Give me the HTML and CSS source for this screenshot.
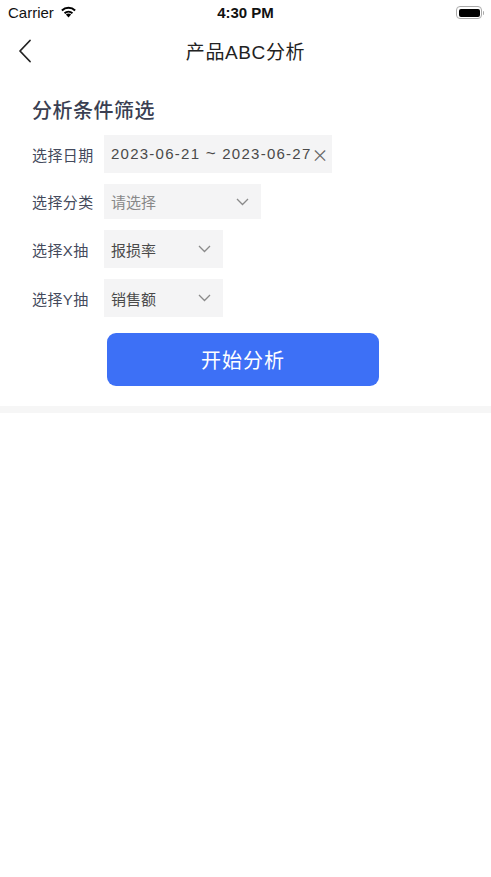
FILE: index.html
```html
<!DOCTYPE html>
<html lang="zh-CN">
<head>
<meta charset="utf-8">
<title>产品ABC分析</title>
<link rel="stylesheet" href="styles.css">
</head>
<body>
<div class="status">
  <div class="status-left">
    <span class="carrier">Carrier</span>
    <svg class="wifi" width="17" height="12" viewBox="0 0 17 12">
      <path d="M8.5 11.5 L5.9 8.6 A3.8 3.8 0 0 1 11.1 8.6 Z" fill="#000"/>
      <path d="M3.9 6.6 A6.6 6.6 0 0 1 13.1 6.6 L11.8 8 A4.8 4.8 0 0 0 5.2 8 Z" fill="#000"/>
      <path d="M1.2 3.7 A10.4 10.4 0 0 1 15.8 3.7 L14.4 5.2 A8.4 8.4 0 0 0 2.6 5.2 Z" fill="#000"/>
    </svg>
  </div>
  <span class="time">4:30 PM</span>
  <div class="battery"><div class="battery-fill"></div></div>
</div>
<div class="nav">
  <svg class="back" width="14" height="24" viewBox="0 0 14 24">
    <path d="M12 1.5 L2 12 L12 22.5" fill="none" stroke="#222" stroke-width="1.8" stroke-linecap="round" stroke-linejoin="round"/>
  </svg>
  <h1 class="title">产品ABC分析</h1>
</div>
<div class="panel">
  <h2 class="section-title">分析条件筛选</h2>
  <div class="row row-date">
    <span class="label">选择日期</span>
    <div class="field field-date"><span class="date-text">2023-06-21 <span class="tilde">~</span> 2023-06-27</span><span class="clear">×</span></div>
  </div>
  <div class="row row-cat">
    <span class="label">选择分类</span>
    <div class="field field-cat"><span class="placeholder">请选择</span>
      <svg class="chev" width="13" height="8" viewBox="0 0 13 8"><path d="M1 1 L6.5 6.5 L12 1" fill="none" stroke="#8a8a8a" stroke-width="1.3"/></svg>
    </div>
  </div>
  <div class="row row-x">
    <span class="label">选择X抽</span>
    <div class="field field-sm"><span>报损率</span>
      <svg class="chev" width="13" height="8" viewBox="0 0 13 8"><path d="M1 1 L6.5 6.5 L12 1" fill="none" stroke="#8a8a8a" stroke-width="1.3"/></svg>
    </div>
  </div>
  <div class="row row-y">
    <span class="label">选择Y抽</span>
    <div class="field field-sm"><span>销售额</span>
      <svg class="chev" width="13" height="8" viewBox="0 0 13 8"><path d="M1 1 L6.5 6.5 L12 1" fill="none" stroke="#8a8a8a" stroke-width="1.3"/></svg>
    </div>
  </div>
  <button class="start">开始分析</button>
</div>
<div class="band"></div>
</body>
</html>
```
FILE: styles.css
```css
* { box-sizing: border-box; }
html, body { margin: 0; padding: 0; background: #fff; }
body {
  width: 491px;
  height: 877px;
  font-family: "Liberation Sans", "Noto Sans CJK SC", sans-serif;
  color: #333;
  overflow: hidden;
}
.status {
  height: 24px;
  display: flex;
  align-items: center;
  justify-content: space-between;
  padding: 0 9px 0 8px;
  position: relative;
  font-family: "Liberation Sans", Arial, sans-serif;
}
.status-left { display: flex; align-items: center; gap: 6px; }
.carrier { font-size: 15px; color: #111; }
.wifi { margin-top: -1px; }
.time {
  position: absolute;
  left: 0; right: 0;
  text-align: center;
  font-size: 15px;
  font-weight: bold;
  color: #111;
  pointer-events: none;
}
.battery {
  width: 26px;
  height: 13px;
  border: 1px solid #aaa;
  border-radius: 4px;
  padding: 1.5px;
  position: relative;
  margin-top: 1px;
}
.battery::after {
  content: "";
  position: absolute;
  right: -3px;
  top: 3.5px;
  width: 1.5px;
  height: 4px;
  background: #aaa;
  border-radius: 0 1px 1px 0;
}
.battery-fill { width: 100%; height: 100%; background: #000; border-radius: 2px; }
.nav {
  height: 52px;
  display: flex;
  align-items: center;
  justify-content: center;
  position: relative;
}
.back { position: absolute; left: 18px; top: 15px; }
.title {
  margin: 0;
  font-size: 19px;
  font-weight: 400;
  color: #222;
  letter-spacing: 0.6px;
}
.panel {
  padding: 22px 0 20px 32px;
}
.section-title {
  margin: 0 0 11px 0;
  font-size: 20px;
  line-height: 26px;
  font-weight: 500;
  color: #3a3f52;
  letter-spacing: 0.5px;
}
.row {
  display: flex;
  align-items: center;
}
.label {
  width: 72px;
  font-size: 15px;
  color: #444a5c;
  letter-spacing: 0.4px;
}
.field {
  background: #f4f4f5;
  display: flex;
  align-items: center;
  justify-content: space-between;
  padding: 0 12px 0 7px;
  font-size: 15px;
  color: #4a4a4a;
  height: 38px;
}
.field-date {
  width: 228px;
  padding-right: 2px;
  justify-content: flex-start;
}
.date-text { letter-spacing: 1.25px; }
.tilde { font-size: 17px; }
.clear { font-size: 17px; color: #666; font-family: "Noto Sans CJK SC", sans-serif; }
.field-cat { width: 157px; height: 35px; }
.placeholder { color: #888; }
.field-sm { width: 119px; }
.row-date { margin-bottom: 11px; }
.row-cat { margin-bottom: 11px; }
.row-x { margin-bottom: 11px; }
.row-y { margin-bottom: 16px; }
.start {
  display: block;
  margin-left: 75px;
  width: 272px;
  height: 53px;
  border: none;
  border-radius: 9px;
  background: #3d70f6;
  color: #fff;
  font-family: "Noto Sans CJK SC", sans-serif;
  font-size: 20px;
  letter-spacing: 1px;
}
.band {
  height: 7px;
  background: #f6f6f6;
}
```
